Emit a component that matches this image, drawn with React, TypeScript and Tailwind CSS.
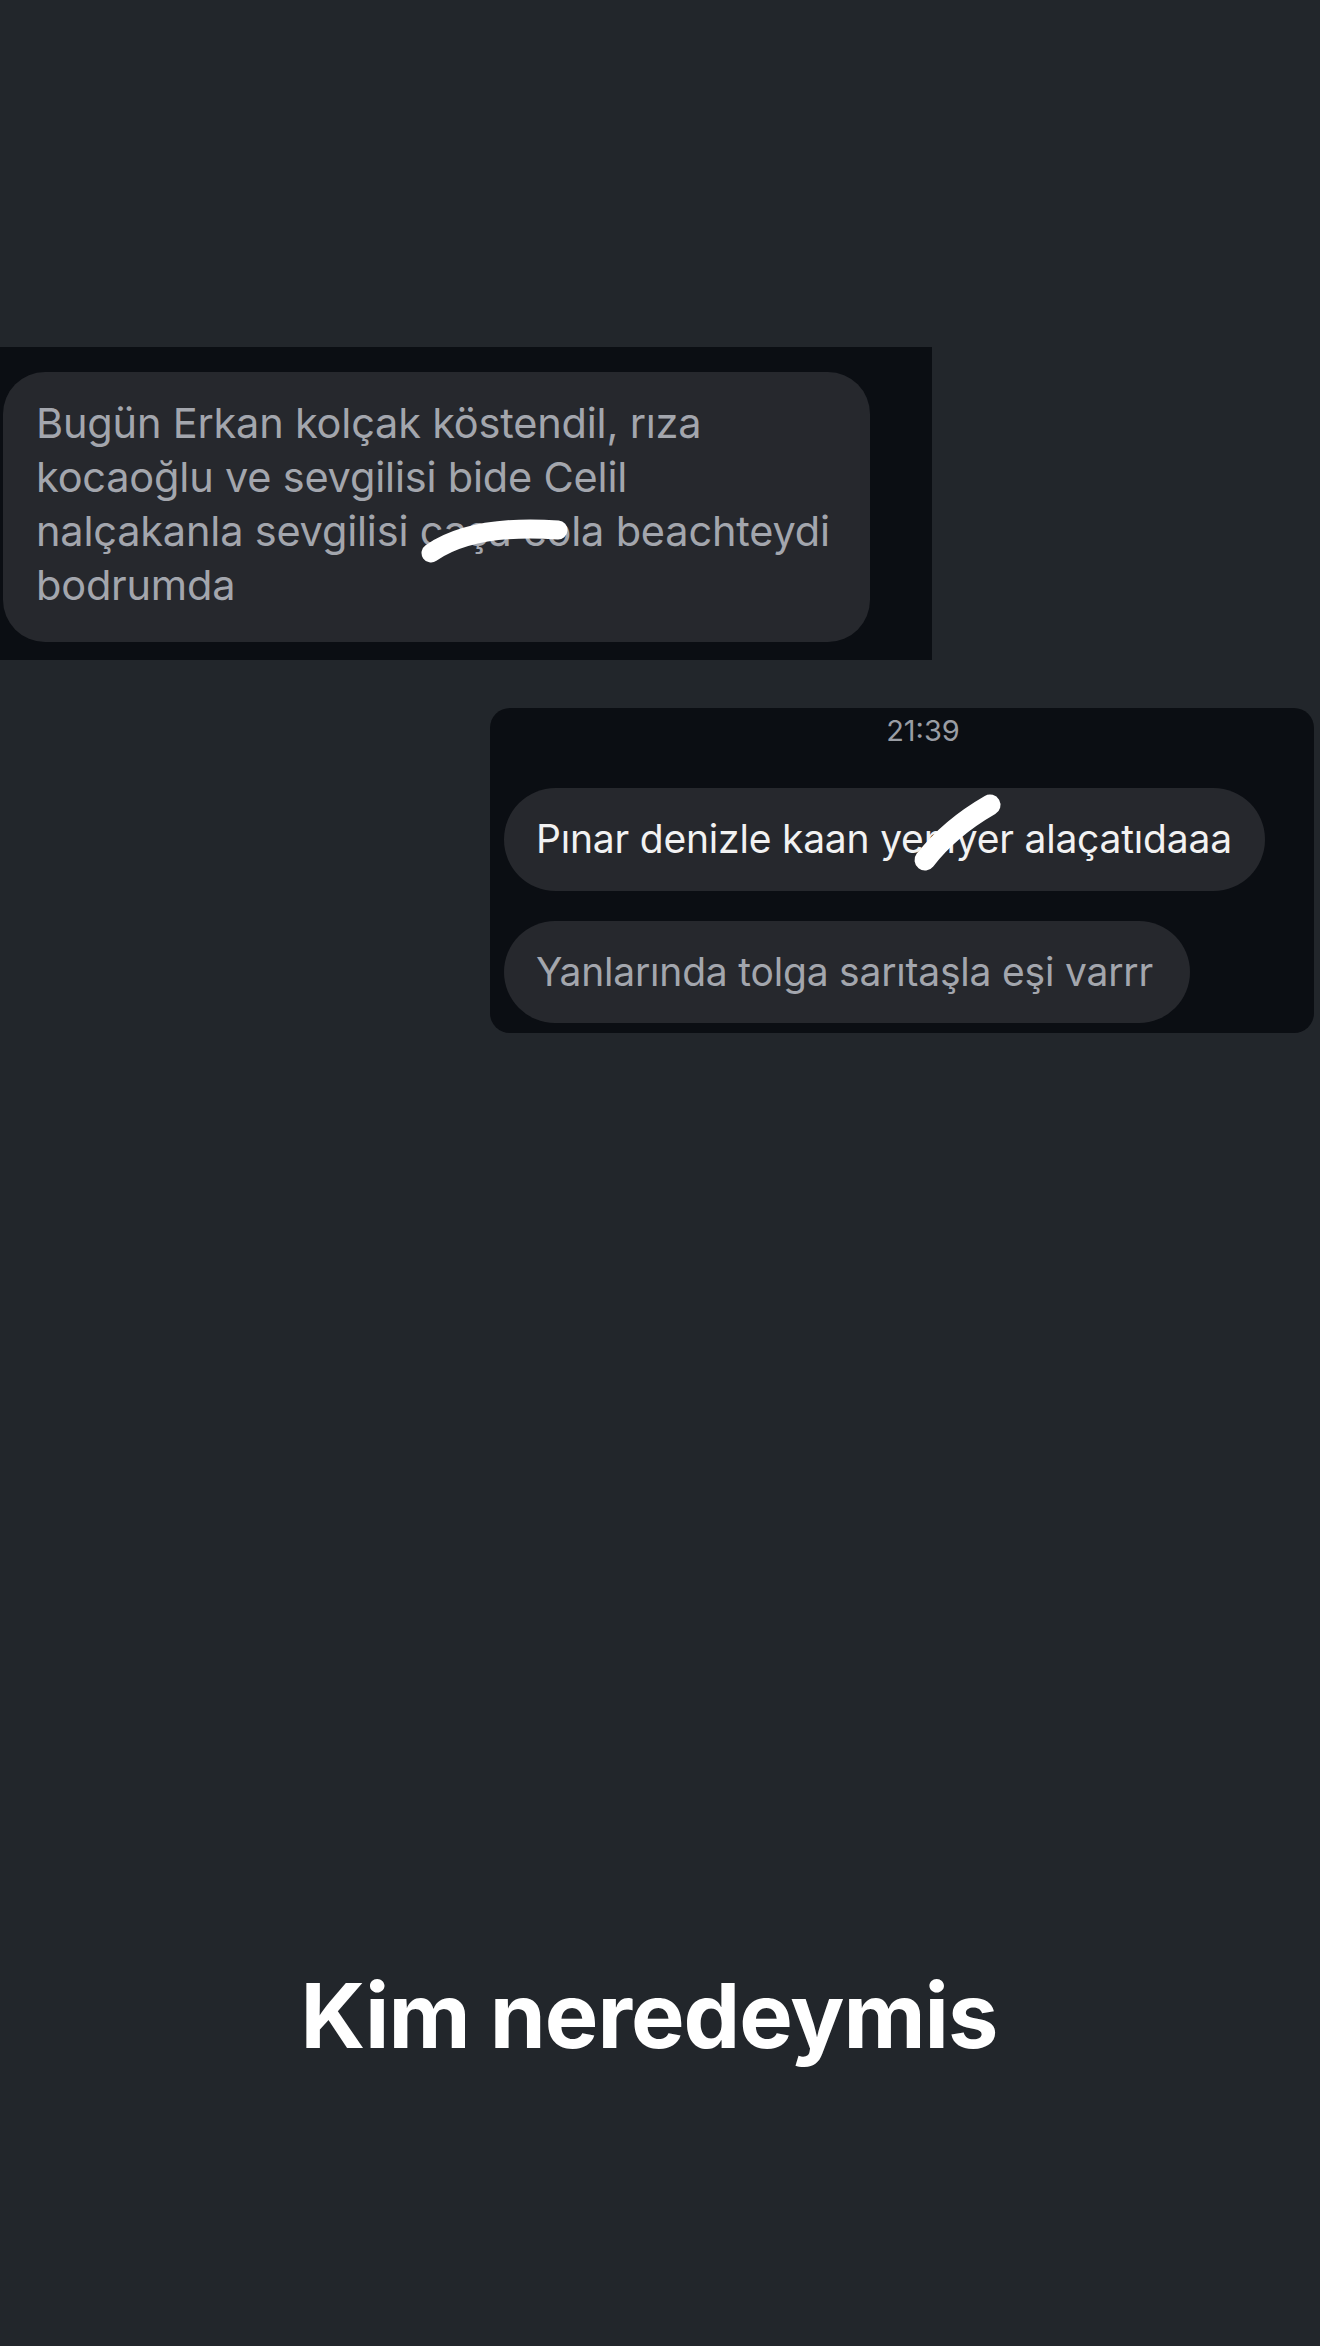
export default function App() {
  return (
    <div className="w-full h-[2346px] bg-[#22262b] flex flex-col overflow-hidden" style={{ fontFamily: 'Inter, "Noto Sans", sans-serif' }}>
      {/* incoming message */}
      <div className="mt-[347px] w-[932px] h-[313px] bg-[#0b0e13] pt-[25px] pl-[3px]">
        <div className="relative w-[867px] h-[270px] rounded-[42px] bg-[#26282d] pl-[33px] pr-[20px] pt-[24px] text-[41.5px] leading-[54px] text-[#a3a6ad] tracking-[-0.2px] whitespace-nowrap">
          Bugün Erkan kolçak köstendil, rıza
          <br />
          kocaoğlu ve sevgilisi bide Celil
          <br />
          nalçakanla sevgilisi çaşa cola beachteydi
          <br />
          bodrumda
          <svg className="absolute left-0 top-0 pointer-events-none" width="867" height="270" viewBox="0 0 867 270">
            <path d="M428 181 Q470 152 555 158" stroke="#ffffff" strokeWidth="19" strokeLinecap="round" fill="none" />
          </svg>
        </div>
      </div>

      {/* outgoing group */}
      <div className="mt-[48px] ml-[490px] w-[824px] h-[325px] bg-[#0b0e13] rounded-[20px] flex flex-col pl-[14px]">
        <div className="text-center text-[29px] leading-none text-[#9a9da4] pt-[8px] pl-[28px]">21:39</div>
        <div className="relative mt-[43px] w-[761px] h-[103px] rounded-full bg-[#26282d] flex items-center pl-[32px] text-[39px] text-[#f2f2f2] tracking-[-0.2px] whitespace-nowrap">
          Pınar denizle kaan yeniyer alaçatıdaaa
          <svg className="absolute left-0 top-0 pointer-events-none" width="761" height="103" viewBox="0 0 761 103">
            <path d="M421 72 Q446 40 486 17" stroke="#ffffff" strokeWidth="21" strokeLinecap="round" fill="none" />
          </svg>
        </div>
        <div className="mt-[30px] w-[686px] h-[102px] rounded-full bg-[#26282d] flex items-center pl-[32px] text-[39px] text-[#a3a6ad] tracking-[-0.2px] whitespace-nowrap">
          Yanlarında tolga sarıtaşla eşi varrr
        </div>
      </div>

      <div className="mt-[938px] text-center pr-[22px] text-[90px] leading-none font-bold text-white tracking-[-1px]">
        Kim neredeymis
      </div>
    </div>
  );
}
